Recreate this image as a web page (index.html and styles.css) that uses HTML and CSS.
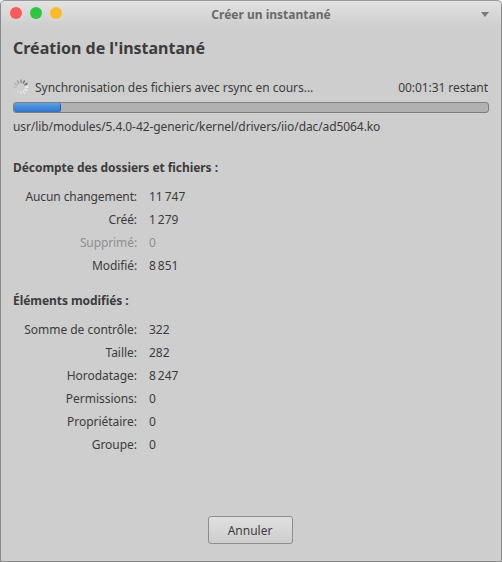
FILE: index.html
```html
<!DOCTYPE html>
<html lang="fr">
  <head>
    <meta charset="UTF-8" />
    <title>Créer un instantané</title>
    <link rel="stylesheet" href="styles.css">
  </head>
  <body>
    <div class="window">
      <div class="titlebar">
        <div class="traffic">
          <span class="dot dot-close"></span>
          <span class="dot dot-max"></span>
          <span class="dot dot-min"></span>
        </div>
        <div class="win-title">Créer un instantané</div>
        <span class="menu-arrow"></span>
      </div>
      <div class="content">
        <h1 class="heading">Création de l'instantané</h1>
        <div class="status-row">
          <svg class="spinner" width="16" height="16" viewBox="0 0 16 16">
            <g stroke-width="1.5" stroke-linecap="butt">
              <line x1="8" y1="0.5" x2="8" y2="4" stroke="#8e8e8e" />
              <line x1="11.75" y1="1.5" x2="10" y2="4.5" stroke="#7c7c7c" />
              <line x1="14.5" y1="4.25" x2="11.5" y2="6" stroke="#6e6e6e" />
              <line x1="15.5" y1="8" x2="12" y2="8" stroke="#f0f0f0" />
              <line x1="14.5" y1="11.75" x2="11.5" y2="10" stroke="#ececec" />
              <line x1="11.75" y1="14.5" x2="10" y2="11.5" stroke="#e6e6e6" />
              <line x1="8" y1="15.5" x2="8" y2="12" stroke="#e0e0e0" />
              <line x1="4.25" y1="14.5" x2="6" y2="11.5" stroke="#dadada" />
              <line x1="1.5" y1="11.75" x2="4.5" y2="10" stroke="#d4d4d4" />
              <line x1="0.5" y1="8" x2="4" y2="8" stroke="#bdbdbd" />
              <line x1="1.5" y1="4.25" x2="4.5" y2="6" stroke="#b0b0b0" />
              <line x1="4.25" y1="1.5" x2="6" y2="4.5" stroke="#a0a0a0" />
            </g>
          </svg>
          <span class="status-text">Synchronisation des fichiers avec rsync en cours...</span>
          <span class="remaining">00:01:31 restant</span>
        </div>
        <div class="progress"><div class="progress-fill" style="width: 47px"></div></div>
        <div class="file-path">usr/lib/modules/5.4.0-42-generic/kernel/drivers/iio/dac/ad5064.ko</div>

        <h2 class="section-title">Décompte des dossiers et fichiers :</h2>
        <div class="stats">
          <span class="label">Aucun changement:</span><span class="value">11&#8239;747</span>
          <span class="label">Créé:</span><span class="value">1&#8239;279</span>
          <span class="label muted">Supprimé:</span><span class="value muted">0</span>
          <span class="label">Modifié:</span><span class="value">8&#8239;851</span>
        </div>

        <h2 class="section-title second">Éléments modifiés :</h2>
        <div class="stats stats-wide">
          <span class="label">Somme de contrôle:</span><span class="value">322</span>
          <span class="label">Taille:</span><span class="value">282</span>
          <span class="label">Horodatage:</span><span class="value">8&#8239;247</span>
          <span class="label">Permissions:</span><span class="value">0</span>
          <span class="label">Propriétaire:</span><span class="value">0</span>
          <span class="label">Groupe:</span><span class="value">0</span>
        </div>

        <div class="actions">
          <button class="btn">Annuler</button>
        </div>
      </div>
    </div>
  </body>
</html>
```

FILE: styles.css
```css
html,
body {
  margin: 0;
  height: 100%;
  background: #f2f2f2;
}
body {
  font-family: "Noto Sans", sans-serif;
  font-size: 12px;
  color: #3c3c3c;
}
.window {
  box-sizing: border-box;
  height: 562px;
  display: flex;
  flex-direction: column;
  background: #cecece;
  border: 1px solid #8a8a8a;
  border-top-color: #9a9a9a;
  border-radius: 5px 5px 0 0;
  overflow: hidden;
}
.titlebar {
  position: relative;
  flex: none;
  height: 26px;
  box-sizing: border-box;
  padding-left: 40px;
  display: flex;
  align-items: center;
  justify-content: center;
  background: linear-gradient(#e2e2e2, #cecece);
}
.traffic {
  position: absolute;
  top: 6px;
  left: 9px;
  display: flex;
  gap: 8px;
}
.dot {
  width: 12px;
  height: 12px;
  border-radius: 50%;
}
.dot-close {
  background: #fb5a5c;
}
.dot-max {
  background: #2ec63e;
}
.dot-min {
  background: #fdb92c;
}
.win-title {
  font-size: 12px;
  font-weight: 700;
  color: #6a6a6a;
}
.menu-arrow {
  position: absolute;
  top: 11px;
  right: 12px;
  border-left: 4px solid transparent;
  border-right: 4px solid transparent;
  border-top: 5px solid #7a7a7a;
}
.content {
  flex: 1;
  display: flex;
  flex-direction: column;
  padding: 0 12px 17px;
}
.heading {
  margin: 10px 0 0;
  font-size: 16px;
  line-height: 23px;
  font-weight: 700;
  color: #3c3c3c;
}
.status-row {
  display: flex;
  align-items: center;
  margin-top: 17px;
  height: 20px;
}
.spinner {
  flex: none;
  margin-right: 6px;
}
.status-text {
  flex: 1;
  letter-spacing: -0.04px;
}
.remaining {
  margin-right: 1px;
  letter-spacing: -0.06px;
}
.progress {
  box-sizing: border-box;
  height: 11px;
  margin-top: 5px;
  background: #b1b1b1;
  border: 1px solid #7f7f7f;
  border-radius: 3px;
}
.progress-fill {
  box-sizing: border-box;
  height: 100%;
  background: linear-gradient(#5c9fe8, #2f74c8);
  border-right: 1px solid #2a5f9f;
  border-radius: 2px;
}
.file-path {
  margin-top: 5px;
  line-height: 17px;
  letter-spacing: -0.09px;
}
.section-title {
  margin: 24px 0 0;
  font-size: 12px;
  line-height: 17px;
  font-weight: 700;
  letter-spacing: -0.06px;
}
.section-title.second {
  margin-top: 18px;
}
.stats {
  display: grid;
  grid-template-columns: 124px auto;
  column-gap: 12px;
  row-gap: 6px;
  margin-top: 12px;
  line-height: 17px;
}
.label {
  text-align: right;
  letter-spacing: -0.1px;
}
.stats-wide .label {
  letter-spacing: -0.03px;
}
.muted {
  color: #8f8f8f;
}
.actions {
  margin-top: auto;
  display: flex;
  justify-content: center;
}
.btn {
  box-sizing: border-box;
  width: 85px;
  height: 28px;
  margin-right: 2px;
  padding: 0;
  font-family: inherit;
  font-size: 12px;
  color: #3c3c3c;
  background: linear-gradient(#e0e0e0, #cdcdcd);
  border: 1px solid #8e8e8e;
  border-radius: 3px;
}
```
